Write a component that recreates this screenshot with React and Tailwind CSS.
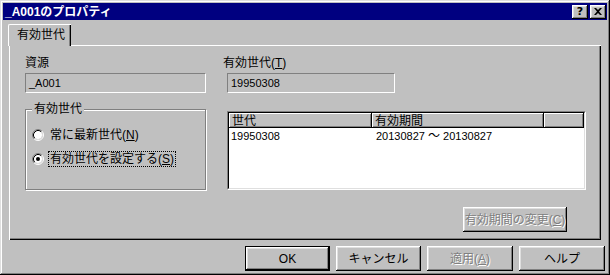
import React from 'react';

const raised =
  'shadow-[inset_-1px_-1px_#000,inset_1px_1px_#fff,inset_-2px_-2px_#808080,inset_2px_2px_#dfdfdf]';
const embossed = 'text-[#808080] [text-shadow:1px_1px_0_#fff]';

const Radio = ({ checked }) => (
  <svg width="12" height="12" viewBox="0 0 12 12" className="shrink-0">
    <circle cx="6" cy="6" r="4" fill="#fff" />
    <path d="M2.11 9.89 A5.5 5.5 0 0 1 9.89 2.11" fill="none" stroke="#808080" />
    <path d="M9.89 2.11 A5.5 5.5 0 0 1 2.11 9.89" fill="none" stroke="#fff" />
    <path d="M2.82 9.18 A4.5 4.5 0 0 1 9.18 2.82" fill="none" stroke="#000" />
    <path d="M9.18 2.82 A4.5 4.5 0 0 1 2.82 9.18" fill="none" stroke="#dfdfdf" />
    {checked && <circle cx="6" cy="6" r="2" fill="#000" />}
  </svg>
);

const TitleBar = () => (
  <div className="h-[17px] bg-[#000080] flex items-center justify-between pl-[2px] pr-[1px]">
    <span className="text-white font-bold text-[12px] leading-[12px]">_A001のプロパティ</span>
    <div className="flex gap-[2px]">
      <div className={`w-[16px] h-[14px] bg-[#c0c0c0] flex items-center justify-center ${raised}`}>
        <span className="font-bold text-[11px] leading-[11px] font-['DejaVu_Sans',sans-serif]">?</span>
      </div>
      <div className={`w-[16px] h-[14px] bg-[#c0c0c0] flex items-center justify-center ${raised}`}>
        <svg width="8" height="7" viewBox="0 0 8 7">
          <path d="M0 0h2l2 2 2-2h2L5 3.5 8 7H6L4 5 2 7H0l3-3.5z" fill="#000" />
        </svg>
      </div>
    </div>
  </div>
);

const Field = ({ children, width }) => (
  <div
    className={`h-[20px] ${width} bg-[#c0c0c0] border-t border-l border-t-[#808080] border-l-[#808080] border-b border-r border-b-white border-r-white flex items-center pl-[3px]`}
  >
    {children}
  </div>
);

const Button = ({ children, disabled, isDefault, width = 'w-[85px]' }) => (
  <div
    className={`${width} h-[25px] bg-[#c0c0c0] flex items-center justify-center ${
      isDefault ? 'border border-black' : ''
    }`}
  >
    <div className={`w-full h-full flex items-center justify-center ${raised} ${disabled ? embossed : ''}`}>
      {children}
    </div>
  </div>
);

const Header = ({ children, width }) => (
  <div
    className={`${width} h-[15px] flex items-center pl-[3px] shrink-0 shadow-[inset_-1px_-1px_#000,inset_1px_1px_#fff,inset_-2px_-2px_#808080]`}
  >
    {children}
  </div>
);

export default function App() {
  return (
    <div className="w-[610px] h-[275px] bg-[#c0c0c0] p-[3px] flex flex-col text-black text-[12px] leading-[12px] font-['Liberation_Sans','Noto_Sans_CJK_JP',sans-serif] shadow-[inset_-1px_-1px_#000,inset_1px_1px_#dfdfdf,inset_-2px_-2px_#808080,inset_2px_2px_#fff]">
      <TitleBar />

      <div className="flex flex-col px-[6px] pt-[4px]">
        {/* tab */}
        <div className="relative z-10 -mb-[1px] -ml-[1px] w-[63px] h-[22px] bg-[#c0c0c0] border-t border-l border-white rounded-tl-[2px] shadow-[inset_-1px_0_#000,inset_-2px_0_#808080] flex items-center pl-[8px] pb-[2px]">
          有効世代
        </div>

        {/* panel */}
        <div className="h-[195px] border-t border-l border-white shadow-[inset_-1px_-1px_#000,inset_-2px_-2px_#808080] pt-[11px] pl-[15px] flex flex-col">
          <div className="grid grid-cols-[181px_359px] gap-x-[21px]">
            <div className="flex flex-col gap-[4px]">
              <span className="h-[12px]">資源</span>
              <Field width="w-[181px]">
                <span className="text-[11px]">_A001</span>
              </Field>
            </div>
            <div className="flex flex-col gap-[4px]">
              <span className="h-[12px] -ml-[4px]">
                有効世代(<span className="underline">T</span>)
              </span>
              <Field width="w-[168px]">
                <span className="text-[11px]">19950308</span>
              </Field>
            </div>

            {/* group box */}
            <div className="relative mt-[16px] h-[81px] border border-[#808080] shadow-[inset_1px_1px_#fff,1px_1px_#fff] pt-[17px] pl-[6px] flex flex-col gap-[8px]">
              <span className="absolute -top-[7px] left-[6px] px-[2px] bg-[#c0c0c0]">有効世代</span>
              <div className="h-[16px] flex items-center gap-[4px]">
                <Radio />
                <span className="px-[2px]">
                  常に最新世代(<span className="underline">N</span>)
                </span>
              </div>
              <div className="h-[16px] flex items-center gap-[4px]">
                <Radio checked />
                <span className="h-[16px] flex items-center px-[1px] border border-dotted border-black">
                  有効世代を設定する(<span className="underline">S</span>)
                </span>
              </div>
            </div>

            {/* list view */}
            <div className="mt-[18px] h-[79px] bg-white border-t border-l border-t-[#808080] border-l-[#808080] border-b border-r border-b-white border-r-white">
              <div className="h-full border-t border-l border-t-black border-l-black border-b border-r border-b-[#dfdfdf] border-r-[#dfdfdf] flex flex-col overflow-hidden">
                <div className="flex bg-[#c0c0c0]">
                  <Header width="w-[143px]">世代</Header>
                  <Header width="w-[172px]">有効期間</Header>
                  <Header width="w-[40px]"></Header>
                </div>
                <div className="flex pt-[2px] text-[11px] leading-[12px]">
                  <span className="w-[143px] pl-[2px]">19950308</span>
                  <span className="pl-[4px]">
                    20130827 <span className="text-[12px]">〜</span> 20130827
                  </span>
                </div>
              </div>
            </div>

            <div></div>
            <div className="flex justify-end pr-[19px] mt-[17px]">
              <Button disabled width="w-[104px]">
                <span className="h-[20px] flex items-center">有効期間の変更(<span className="underline">C</span>)</span>
              </Button>
            </div>
          </div>
        </div>
      </div>

      <div className="flex justify-end gap-[6px] pr-[2px] mt-[6px]">
        <Button isDefault>
          <span>OK</span>
        </Button>
        <Button>キャンセル</Button>
        <Button disabled width="w-[86px]">
          <span>
            適用(<span className="underline">A</span>)
          </span>
        </Button>
        <Button width="w-[86px]">ヘルプ</Button>
      </div>
    </div>
  );
}
